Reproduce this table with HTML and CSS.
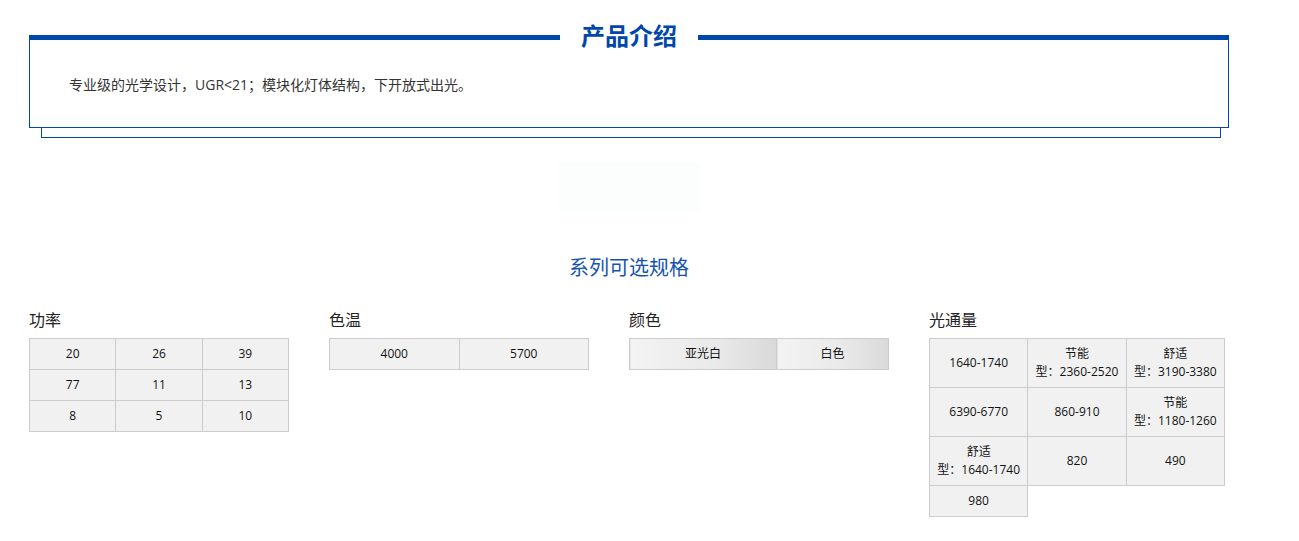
FILE: index.html
```html
<!DOCTYPE html>
<html lang="zh-CN">

<head>
    <meta charset="UTF-8">
    <meta name="viewport" content="width=device-width, initial-scale=1.0">
    <title>产品介绍</title>
    <link rel="stylesheet" href="styles.css">
</head>

<body>
    <div class="wrap">
        <div class="intro">
            <h2 class="intro-title"><span>产品介绍</span></h2>
            <div class="intro-box">
                <p>专业级的光学设计，UGR&lt;21；模块化灯体结构，下开放式出光。</p>
            </div>
        </div>

        <div class="pic"></div>

        <h3 class="spec-title">系列可选规格</h3>

        <div class="specs">
            <div class="spec">
                <h4>功率</h4>
                <table class="grid w260">
                    <tr><td>20</td><td>26</td><td>39</td></tr>
                    <tr><td>77</td><td>11</td><td>13</td></tr>
                    <tr><td>8</td><td>5</td><td>10</td></tr>
                </table>
            </div>
            <div class="spec">
                <h4>色温</h4>
                <table class="grid w260">
                    <tr><td>4000</td><td>5700</td></tr>
                </table>
            </div>
            <div class="spec">
                <h4>颜色</h4>
                <table class="grid w260 shade">
                    <colgroup><col class="c1"><col></colgroup>
                    <tr><td>亚光白</td><td>白色</td></tr>
                </table>
            </div>
            <div class="spec">
                <h4>光通量</h4>
                <table class="grid w296">
                    <tr><td>1640-1740</td><td>节能<span class="nw">型：2360-2520</span></td><td>舒适<span class="nw">型：3190-3380</span></td></tr>
                    <tr><td>6390-6770</td><td>860-910</td><td>节能<span class="nw">型：1180-1260</span></td></tr>
                    <tr><td>舒适<span class="nw">型：1640-1740</span></td><td>820</td><td>490</td></tr>
                    <tr><td>980</td></tr>
                </table>
            </div>
        </div>
    </div>
</body>

</html>
```

FILE: styles.css
```css
body {
    margin: 0;
    padding: 0;
    background: #fff;
    font-family: "Open Sans", "Noto Sans CJK SC", sans-serif;
    color: #222;
}

.wrap {
    width: 1200px;
    padding: 23px 0 30px 29px;
}

/* 产品介绍 */
.intro {
    position: relative;
}

.intro::before {
    content: "";
    position: absolute;
    left: 12px;
    right: 8px;
    top: 20px;
    bottom: -10px;
    border: 1px solid #0047ab;
}

.intro-title {
    position: relative;
    z-index: 2;
    margin: 0;
    height: 0;
    text-align: center;
    font-size: 24px;
    line-height: 28px;
    font-weight: bold;
    color: #0047ab;
    font-family: "Noto Sans CJK SC", sans-serif;
}

.intro-title span {
    position: relative;
    top: -2px;
    display: inline-block;
    padding: 0 21px;
    background: #fff;
}

.intro-box {
    position: relative;
    z-index: 1;
    margin-top: 12px;
    background: #fff;
    border: 1px solid #0047ab;
    border-top: 5px solid #0047ab;
    padding: 36px 39px 33px;
}

.intro-box p {
    margin: 0;
    font-size: 14px;
    line-height: 18px;
    color: #333;
}

.pic {
    width: 141px;
    height: 51px;
    margin: 34px auto 0;
    background: #fcfdfd;
}

.spec-title {
    margin: 43px 0 0;
    text-align: center;
    font-size: 20px;
    line-height: 24px;
    font-weight: normal;
    color: #1553b0;
}

/* 规格表 */
.specs {
    display: flex;
    margin-top: 30px;
}

.spec {
    width: 300px;
}

.spec h4 {
    margin: 0 0 8px;
    font-size: 16px;
    line-height: 20px;
    font-weight: normal;
    color: #222;
}

.grid {
    border-collapse: collapse;
    table-layout: fixed;
}

.w260 {
    width: 260px;
}

.w296 {
    width: 296px;
}

.grid td {
    border: 1px solid #ccc;
    background: #f1f1f1;
    padding: 6px 4px;
    font-size: 12px;
    line-height: 18px;
    text-align: center;
    color: #111;
}

.nw {
    white-space: nowrap;
}

.shade .c1 {
    width: 147px;
}

.shade td {
    background: linear-gradient(to right, #f3f3f3, #e9e9e9 60%, #d9d9d9);
}
```
